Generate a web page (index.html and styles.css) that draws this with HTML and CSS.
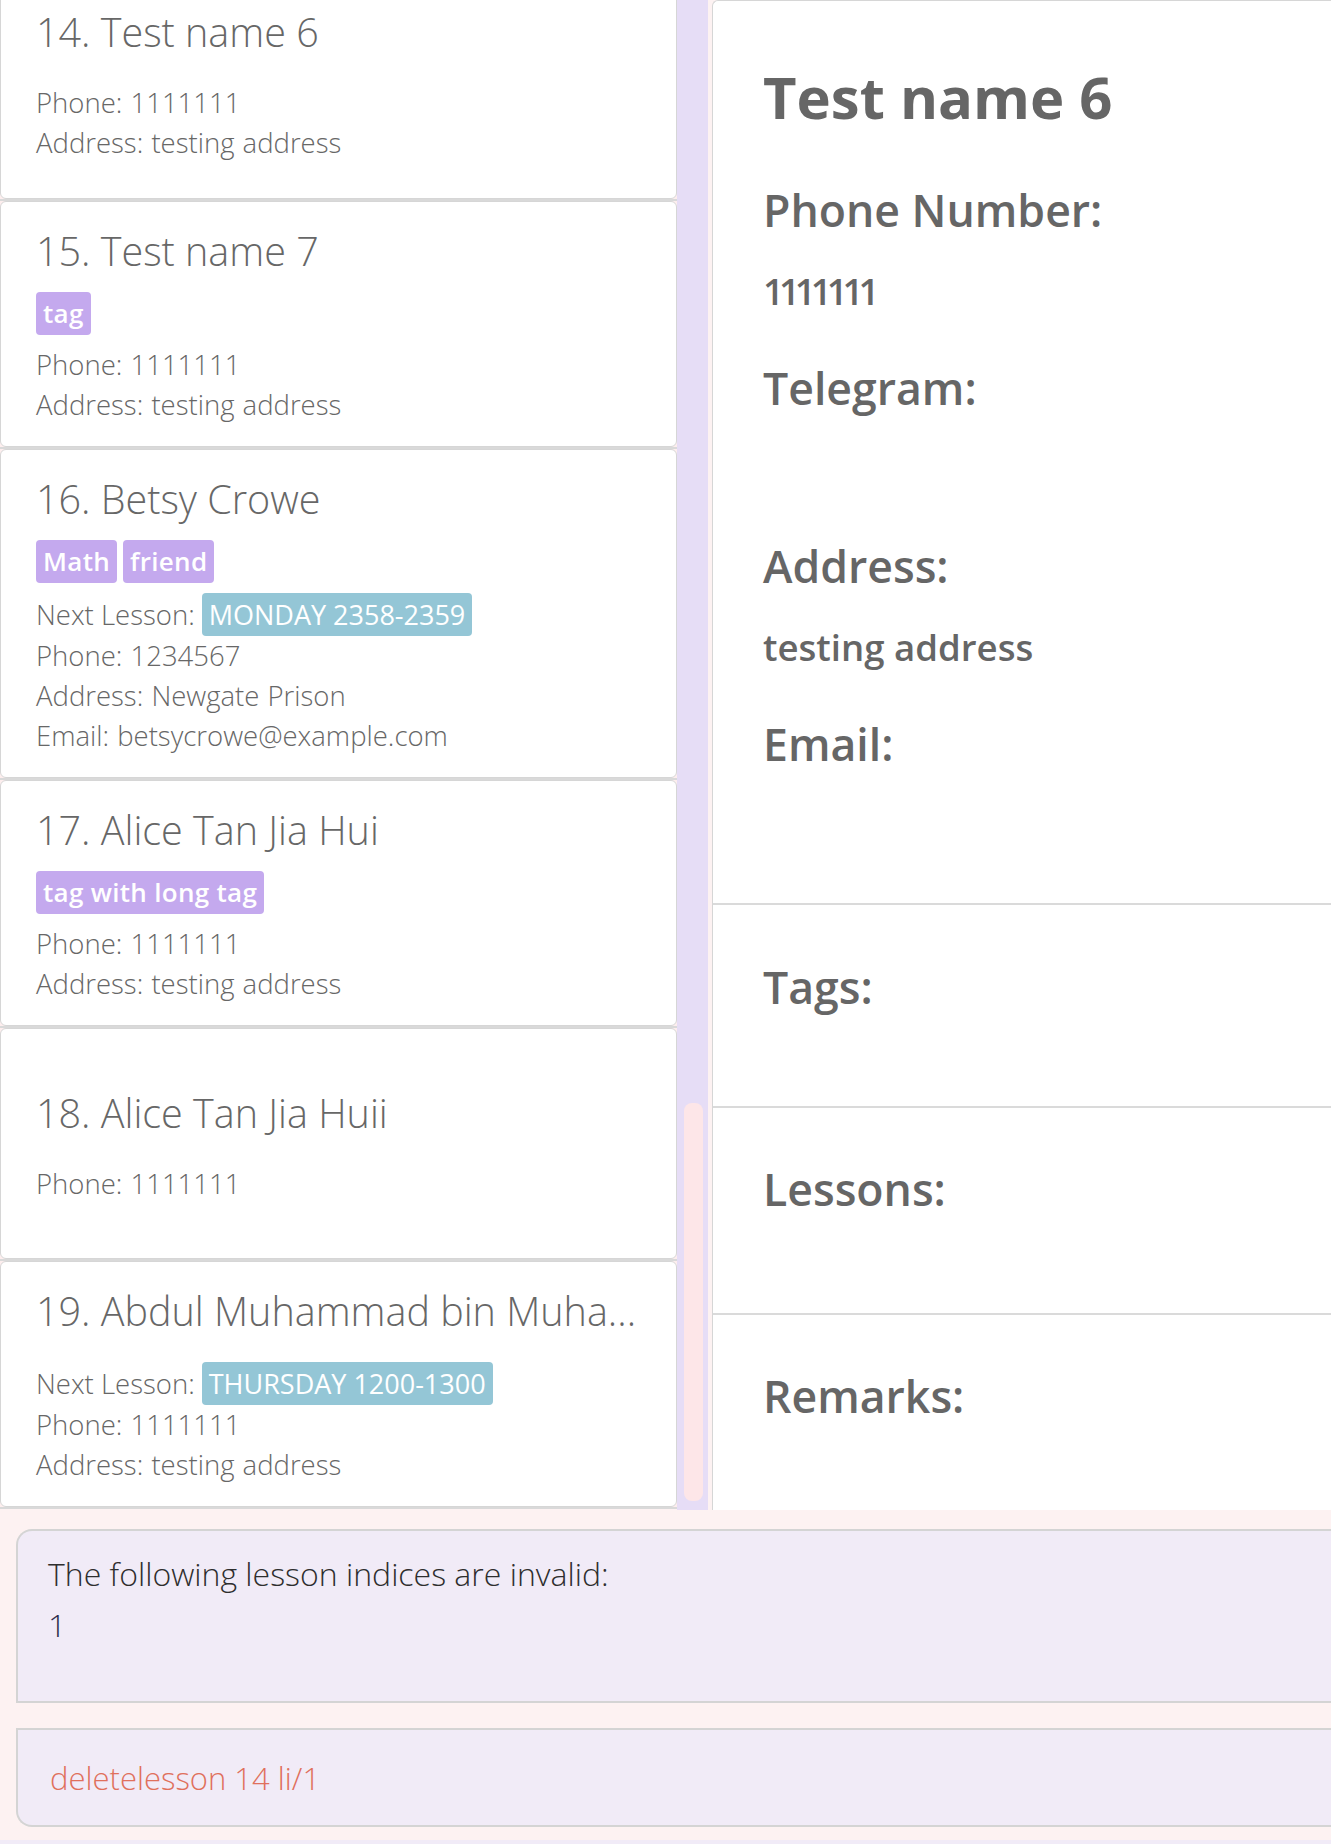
FILE: index.html
```html
<!DOCTYPE html>
<html lang="en">
<head>
<meta charset="utf-8">
<title>Tutor address book</title>
<link rel="stylesheet" href="styles.css">
</head>
<body>
<div class="app">
  <div class="main">
    <div class="list-pane">
      <div class="list-viewport">
        <ul class="person-list">
          <li class="person-cell">
            <div class="card card--first">
              <div class="card-name">14. Test name 6</div>
              <div class="tags"></div>
              <div class="field-row">Phone: 1111111</div>
              <div class="field-row">Address: testing address</div>
            </div>
          </li>
          <li class="person-cell">
            <div class="card">
              <div class="card-name">15. Test name 7</div>
              <div class="tags"><span class="tag">tag</span></div>
              <div class="field-row">Phone: 1111111</div>
              <div class="field-row">Address: testing address</div>
            </div>
          </li>
          <li class="person-cell">
            <div class="card">
              <div class="card-name">16. Betsy Crowe</div>
              <div class="tags"><span class="tag">Math</span><span class="tag">friend</span></div>
              <div class="lesson-row"><span>Next Lesson:</span><span class="lesson-chip">MONDAY 2358-2359</span></div>
              <div class="field-row">Phone: 1234567</div>
              <div class="field-row">Address: Newgate Prison</div>
              <div class="field-row">Email: betsycrowe@example.com</div>
            </div>
          </li>
          <li class="person-cell">
            <div class="card">
              <div class="card-name">17. Alice Tan Jia Hui</div>
              <div class="tags"><span class="tag">tag with long tag</span></div>
              <div class="field-row">Phone: 1111111</div>
              <div class="field-row">Address: testing address</div>
            </div>
          </li>
          <li class="person-cell">
            <div class="card card--centered">
              <div class="card-name">18. Alice Tan Jia Huii</div>
              <div class="tags"></div>
              <div class="field-row">Phone: 1111111</div>
            </div>
          </li>
          <li class="person-cell">
            <div class="card">
              <div class="card-name">19. Abdul Muhammad bin Muha...</div>
              <div class="tags"></div>
              <div class="lesson-row"><span>Next Lesson:</span><span class="lesson-chip">THURSDAY 1200-1300</span></div>
              <div class="field-row">Phone: 1111111</div>
              <div class="field-row">Address: testing address</div>
            </div>
          </li>
        </ul>
      </div>
      <div class="scrollbar"><div class="scroll-thumb"></div></div>
    </div>

    <section class="detail">
      <div class="detail-section detail-section--info">
        <h1 class="detail-title">Test name 6</h1>
        <div class="detail-field">
          <div class="detail-label">Phone Number:</div>
          <div class="detail-value detail-value--phone">1111111</div>
        </div>
        <div class="detail-field">
          <div class="detail-label">Telegram:</div>
          <div class="detail-value"></div>
        </div>
        <div class="detail-field">
          <div class="detail-label">Address:</div>
          <div class="detail-value">testing address</div>
        </div>
        <div class="detail-field">
          <div class="detail-label">Email:</div>
          <div class="detail-value"></div>
        </div>
      </div>
      <div class="detail-section detail-section--tags">
        <div class="detail-label">Tags:</div>
      </div>
      <div class="detail-section detail-section--lessons">
        <div class="detail-label">Lessons:</div>
      </div>
      <div class="detail-section detail-section--remarks">
        <div class="detail-label">Remarks:</div>
      </div>
    </section>
  </div>

  <div class="result-box">
    <div class="result-line">The following lesson indices are invalid:</div>
    <div class="result-line result-line--index">1</div>
  </div>

  <div class="command-box">
    <span class="command-text">deletelesson 14 li/1</span>
  </div>

  <div class="status-strip"></div>
</div>
</body>
</html>
```

FILE: styles.css
```css
html, body {
  margin: 0;
  padding: 0;
}

body {
  background: #fdf2f2;
  font-family: "Open Sans", "Noto Sans", "Liberation Sans", sans-serif;
  width: 1331px;
  height: 1844px;
  overflow: hidden;
}

.app {
  display: flex;
  flex-direction: column;
  height: 1844px;
}

.main {
  display: flex;
  height: 1510px;
  flex: none;
}

/* ---------- person list ---------- */
.list-pane {
  display: flex;
  flex: none;
}

.list-viewport {
  width: 677px;
  height: 1510px;
  overflow: hidden;
}

.person-list {
  list-style: none;
  margin: -18px 0 0 0;
  padding: 0;
}

.person-cell {
  background: #fdeeee;
  border-bottom: 2px solid #d9d9d9;
}

.card {
  background: #ffffff;
  border: 1px solid #d6d6d6;
  border-radius: 6px;
  padding: 23px 10px 21px 35px;
  color: #676767;
}

.card--first {
  padding-bottom: 35px;
}

.card--centered {
  padding-top: 58px;
  padding-bottom: 54px;
}

.card-name {
  font-size: 39.5px;
  font-weight: 300;
  line-height: 52px;
  margin-bottom: 15px;
  white-space: nowrap;
  overflow: hidden;
  text-overflow: ellipsis;
}

.tags {
  display: flex;
  flex-wrap: wrap;
  gap: 6px;
  margin-bottom: 10px;
}

.tag {
  display: inline-block;
  height: 43px;
  line-height: 43px;
  padding: 0 7px;
  background: #c4a9ee;
  color: #ffffff;
  font-size: 26px;
  font-weight: 600;
  letter-spacing: 0.3px;
  border-radius: 4px;
}

.lesson-row {
  display: flex;
  align-items: center;
  gap: 7px;
  height: 43px;
  font-size: 27.5px;
  font-weight: 300;
}

.lesson-chip {
  display: inline-block;
  height: 43px;
  line-height: 43px;
  padding: 0 7px;
  background: #94c6d6;
  color: #ffffff;
  font-size: 27px;
  font-weight: 400;
  border-radius: 4px;
}

.field-row {
  font-size: 27.5px;
  font-weight: 300;
  line-height: 40px;
  word-spacing: 1px;
  white-space: nowrap;
}

/* ---------- scrollbar ---------- */
.scrollbar {
  width: 31px;
  height: 1510px;
  background: #e6ddf6;
  padding-top: 1103px;
  box-sizing: border-box;
}

.scroll-thumb {
  width: 19px;
  height: 398px;
  margin-left: 7px;
  background: #fde6e8;
  border-radius: 8px;
}

/* ---------- detail panel ---------- */
.detail {
  flex: 1;
  margin-left: 4px;
  background: #ffffff;
  border-top: 1px solid #d6d6d6;
  border-left: 1px solid #d6d6d6;
  border-top-left-radius: 6px;
  display: flex;
  flex-direction: column;
  color: #666666;
  min-width: 0;
}

.detail-section {
  padding-left: 50px;
}

.detail-section + .detail-section {
  border-top: 2px solid #dadada;
}

.detail-section--info {
  padding-top: 56px;
  padding-bottom: 58px;
}

.detail-section--tags {
  padding-top: 52px;
  padding-bottom: 89px;
}

.detail-section--lessons {
  padding-top: 51px;
  padding-bottom: 94px;
}

.detail-section--remarks {
  padding-top: 51px;
  flex: 1;
}

.detail-title {
  margin: 0 0 43px 0;
  font-size: 58px;
  font-weight: 700;
  line-height: 80px;
  white-space: nowrap;
}

.detail-field + .detail-field {
  margin-top: 47px;
}

.detail-label {
  font-size: 44.6px;
  font-weight: 600;
  line-height: 60px;
  white-space: nowrap;
}

.detail-value {
  margin-top: 31px;
  min-height: 40px;
  font-size: 36.6px;
  font-weight: 600;
  line-height: 40px;
  white-space: nowrap;
}

.detail-value--phone {
  letter-spacing: -5px;
}

/* ---------- result & command boxes ---------- */
.result-box {
  flex: none;
  margin-top: 19px;
  margin-left: 16px;
  height: 174px;
  box-sizing: border-box;
  background: #f1ebf7;
  border: 2px solid #d4d4d4;
  border-right: none;
  border-top-left-radius: 16px;
  padding: 17px 0 0 30px;
  color: #2e2e2e;
}

.result-line {
  font-size: 32px;
  font-weight: 300;
  line-height: 51px;
  white-space: nowrap;
}

.result-line--index {
  color: #2e2e4e;
}

.command-box {
  flex: none;
  margin-top: 25px;
  margin-left: 16px;
  height: 99px;
  box-sizing: border-box;
  background: #f1ebf7;
  border: 2px solid #d4d4d4;
  border-right: none;
  border-bottom-left-radius: 16px;
  padding-left: 32px;
  display: flex;
  align-items: center;
}

.command-text {
  font-size: 31px;
  font-weight: 300;
  line-height: 42px;
  color: #e0705c;
  white-space: nowrap;
}

.status-strip {
  flex: none;
  margin-top: 13px;
  height: 4px;
  background: #f1ebf7;
}
```
